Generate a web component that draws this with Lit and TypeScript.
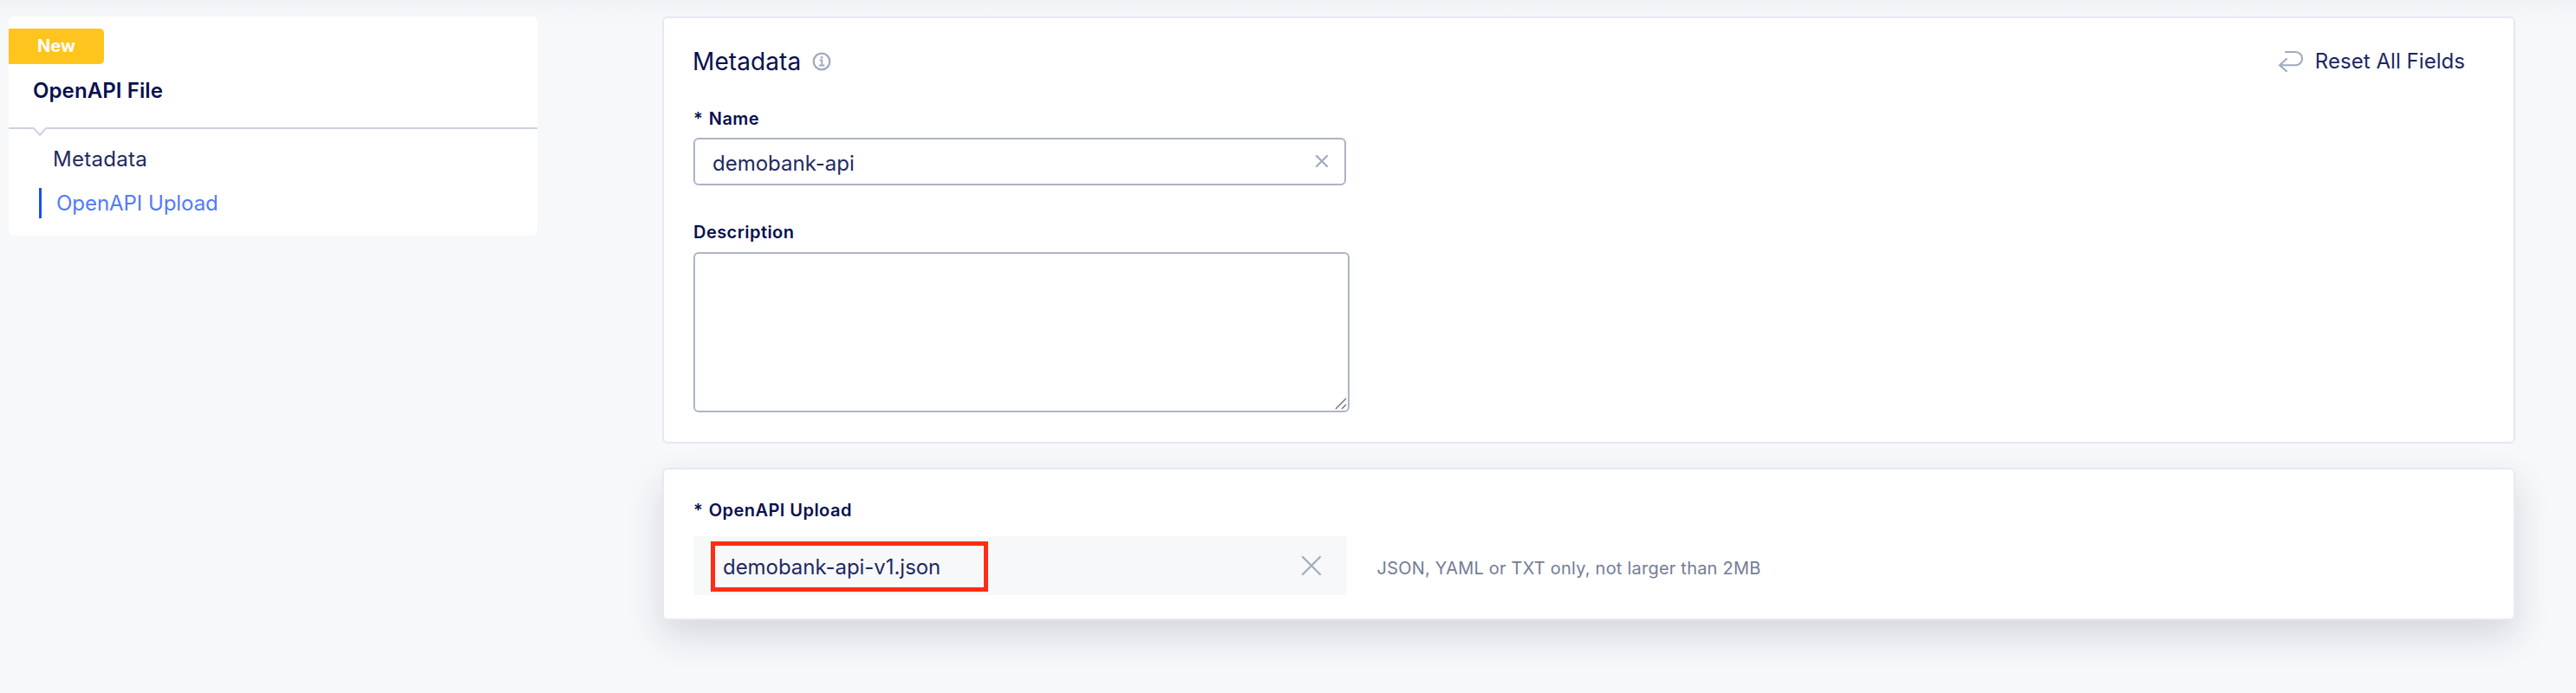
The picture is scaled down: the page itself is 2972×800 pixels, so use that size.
import { LitElement, html, css } from "lit";
import { customElement, state } from "lit/decorators.js";
import { classMap } from "lit/directives/class-map.js";

@customElement("app-root")
class AppRoot extends LitElement {
  @state() private active = "OpenAPI Upload";
  private sections = ["Metadata", "OpenAPI Upload"];

  static styles = css`
    :host {
      display: block;
      box-sizing: border-box;
      height: 800px;
      overflow: hidden;
      padding: 19px 70px 0 10px;
      background: linear-gradient(#f2f3f5, #f4f5f8 12px, #f7f8fa 30px);
      font-family: Inter, sans-serif;
      font-size: 24px;
      color: #1f2a60;
    }
    * { box-sizing: border-box; }
    svg { display: block; flex: none; fill: none; stroke: #a0a9bf; }
    .page { display: flex; align-items: flex-start; gap: 144px; }
    .side { width: 610px; height: 253px; background: #fff; border-radius: 6px; padding-top: 13.5px; }
    .badge {
      width: 109.5px; height: 41px; border-radius: 0 5px 5px 0;
      background: #ffc41d; color: #fff;
      font-size: 20px; font-weight: 700; line-height: 41px; padding-left: 33px;
    }
    .side-title { margin-top: 16px; padding-left: 28px; line-height: 30px; font-weight: 600; color: #07104f; letter-spacing: 0.1px; }
    .divider { display: flex; margin-top: 27px; height: 12px; }
    .divider .rule { height: 2px; background: #cdd2e0; }
    .divider .start { width: 29px; }
    .divider .rest { flex: 1; }
    .divider svg { stroke: #cdd2e0; }
    .nav { display: flex; flex-direction: column; gap: 17px; padding: 7px 0 0 35px; }
    .nav-item { height: 34.5px; line-height: 35px; padding-left: 16px; color: #1f2a60; letter-spacing: 0.3px; }
    .nav-item.active { color: #5479fb; border-left: 3px solid #1450f5; padding-left: 17px; letter-spacing: -0.05px; }
    .main { flex: 1; display: flex; flex-direction: column; gap: 28px; }
    .card { background: #fff; border: 2px solid #e6e9f2; border-radius: 6px; padding-left: 34px; }
    .meta { height: 493px; padding-top: 33px; }
    .upload { height: 176px; padding-top: 33px; box-shadow: 0 18px 42px rgba(20, 34, 60, 0.15); }
    .head { display: flex; align-items: center; height: 34px; padding-right: 56px; }
    .title { font-size: 28px; font-weight: 430; line-height: 34px; color: #07104f; letter-spacing: 0.1px; margin-left: -1px; }
    .info { margin-left: 12.5px; }
    .reset { display: flex; align-items: center; margin-left: auto; line-height: 34px; color: #1b2864; letter-spacing: 0.05px; }
    .reset svg { margin-right: 13px; }
    .label { font-size: 20px; line-height: 28px; font-weight: 600; color: #07104f; letter-spacing: 0.45px; }
    .star { display: inline-block; width: 17.8px; }
    .name { margin-top: 34.5px; }
    .input {
      display: flex; align-items: center; justify-content: space-between;
      width: 753px; height: 55px; margin-top: 8.5px; padding: 0 18px 0 20px;
      border: 2px solid #adb4c6; border-radius: 6px;
    }
    .input span { line-height: 34px; padding-top: 4px; }
    .input svg { margin-top: -2px; }
    .desc { margin-top: 40px; }
    .area {
      width: 757px; height: 185px; margin-top: 9px;
      border: 2px solid #adb4c6; border-radius: 6px;
      display: flex; align-items: flex-end; justify-content: flex-end;
    }
    .area svg { stroke: #777; margin: 0 1px 1px 0; }
    .row { display: flex; align-items: center; gap: 34.5px; margin-top: 15.5px; }
    .file {
      display: flex; align-items: center; justify-content: space-between;
      width: 754px; height: 68px; background: #f7f8fa; padding: 4px 29px 0 19.5px;
    }
    .file svg { margin-top: -4px; }
    .mark { width: 320px; height: 58px; margin-top: -1px; border: 5px solid #ff2d14; line-height: 44px; padding: 3px 0 0 9.5px; letter-spacing: -0.04px; }
    .hint { font-size: 20px; line-height: 28px; color: #737d95; letter-spacing: 0.22px; padding-top: 6px; }
  `;

  render() {
    return html`
      <div class="page">
        <aside class="side">
          <div class="badge">New</div>
          <div class="side-title">OpenAPI File</div>
          <div class="divider">
            <div class="rule start"></div>
            <svg width="14" height="12" viewBox="0 0 14 12" stroke-width="2"><path d="M0 1 7 9 14 1" /></svg>
            <div class="rule rest"></div>
          </div>
          <nav class="nav">
            ${this.sections.map(
              (s) => html`<div class=${classMap({ "nav-item": true, active: s === this.active })}
                @click=${() => (this.active = s)}>${s}</div>`
            )}
          </nav>
        </aside>
        <main class="main">
          <section class="card meta">
            <div class="head">
              <div class="title">Metadata</div>
              <svg class="info" width="22" height="22" viewBox="0 0 22 22" stroke-width="2.3">
                <circle cx="11" cy="11" r="9.3" />
                <path d="M8.500 9.500h2.800v6M8 15.500h6.300" stroke-width="1.900" />
                <circle cx="11" cy="6.3" r="1.4" fill="#a0a9bf" stroke="none" />
              </svg>
              <div class="reset">
                <svg width="30" height="26" viewBox="0 0 30 26" stroke-width="2.1" stroke-linecap="round" stroke-linejoin="round">
                  <path d="M9 2H20.500a7.600 7.600 0 0 1 0 15.200H2M10 10 2 17.200 10 24.200" />
                </svg>
                <span>Reset All Fields</span>
              </div>
            </div>
            <div class="label name"><span class="star">*</span>Name</div>
            <div class="input">
              <span>demobank-api</span>
              <svg width="16" height="16" viewBox="0 0 16 16" stroke-width="2.2" stroke-linecap="round"><path d="M2 2 14 14M14 2 2 14" /></svg>
            </div>
            <div class="label desc">Description</div>
            <div class="area">
              <svg width="14" height="14" viewBox="0 0 14 14" stroke-width="1.5"><path d="M1 13 13 1M8 13 13 8" /></svg>
            </div>
          </section>
          <section class="card upload">
            <div class="label"><span class="star">*</span>OpenAPI Upload</div>
            <div class="row">
              <div class="file">
                <div class="mark">demobank-api-v1.json</div>
                <svg width="24" height="24" viewBox="0 0 24 24" stroke-width="2.2" stroke-linecap="round"><path d="M2 2 22 22M22 2 2 22" /></svg>
              </div>
              <div class="hint">JSON, YAML or TXT only, not larger than 2MB</div>
            </div>
          </section>
        </main>
      </div>
    `;
  }
}
